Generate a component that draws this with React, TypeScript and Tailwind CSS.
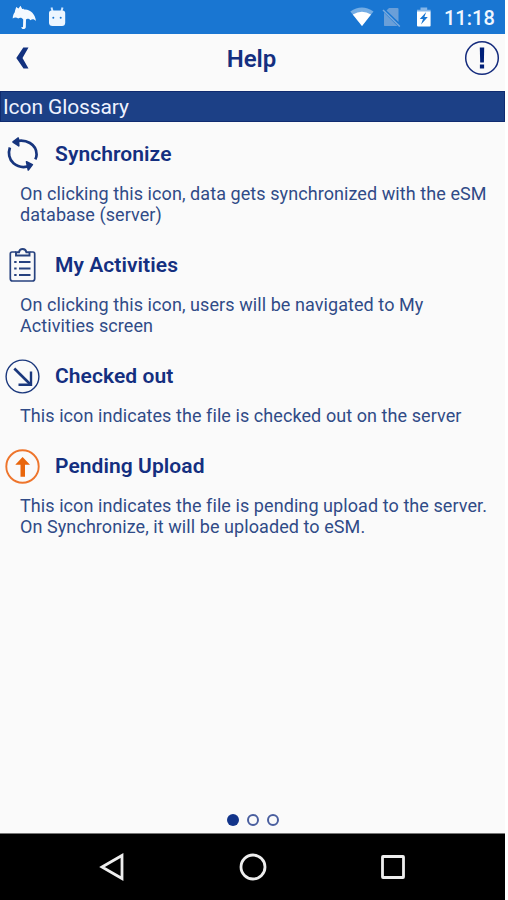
import type { ReactNode } from 'react';

// ---------------------------------------------------------------------------
// Status bar icons
// ---------------------------------------------------------------------------

function UmbrellaIcon() {
  return (
    <svg aria-hidden="true" className="h-6 w-6 shrink-0" viewBox="0 0 24 24" fill="#f4f9ff">
      <path d="M.7 13.500C1 8 4 4.800 8 4.300L13 4.500C19 5 23 9 24 16C22 13.700 20 13.700 18.500 15.200C16.800 13.500 15 13.500 14 14.500L13.800 22C13.800 23.800 12 24.300 10.500 24L9 22.500L11 22L11.200 14.500C10 12.500 8 12 6.200 13.500C4.500 12 2.500 12 .7 13.500Z" />
      <path d="M2.800 6.500L4.200 2L6.500 3.500L8.500 .8L10.200 4L12 3.800L11 7L4 9Z" />
    </svg>
  );
}

function AndroidHeadIcon() {
  return (
    <svg aria-hidden="true" className="h-5 w-[18px] shrink-0" viewBox="0 0 18 20">
      <path d="M3.500 .5L4.500 4M14.500 .5L13.500 4" stroke="#cfe6ff" strokeWidth="2" />
      <path d="M1 6Q1 3.500 3.500 3.500H14.500Q17.200 3.500 17.200 6V15.500Q17.200 19 14 19H4.500Q1 19 1 15.500Z" fill="#edf6ff" />
      <circle cx="5.300" cy="10.700" r="1" fill="#1976d2" />
      <circle cx="12.700" cy="10.700" r="1" fill="#1976d2" />
    </svg>
  );
}

function WifiIcon() {
  return (
    <svg aria-hidden="true" className="h-5 w-6 shrink-0" viewBox="0 0 24 20">
      <path d="M.3 4.500Q11.800-3.500 23.500 4.500L12 19Z" fill="#75ade4" />
      <path d="M2.800 7.500Q12 2 21 7.500L12 19Z" fill="#fff" />
    </svg>
  );
}

function NoSimIcon() {
  return (
    <svg aria-hidden="true" className="h-5 w-[19px] shrink-0" viewBox="0 0 19 20">
      <path d="M7 1H15.500Q16.500 1 16.500 2V15L4.500 3.500Z" fill="#6a9fd8" />
      <path d="M2 5.500L15.500 19H2.500Q2 19 2 18Z" fill="#6a9fd8" />
      <path d="M1 3L17.800 19.500" stroke="#78aadf" strokeWidth="1.500" />
    </svg>
  );
}

function BatteryIcon() {
  return (
    <svg aria-hidden="true" className="h-5 w-4 shrink-0" viewBox="0 0 16 20">
      <path d="M1 5V2.800H4.500V.6H11.200V2.800H14.600V5Z" fill="#85b6e8" />
      <path d="M1 4.500H14.600V18.500Q14.600 19.400 13.600 19.400H2Q1 19.400 1 18.500Z" fill="#fff" />
      <path d="M10.200 5L3.800 12H7L5 17.500L11.800 10H8.400Z" fill="#1976d2" />
    </svg>
  );
}

// ---------------------------------------------------------------------------
// Screen icons
// ---------------------------------------------------------------------------

function BackIcon() {
  return (
    <svg aria-hidden="true" className="h-6 w-4" viewBox="0 0 16 24">
      <path d="M8.300 1.500H13.500L7.500 12L13.500 22.500H8.500L1.300 12Z" fill="#12317f" />
    </svg>
  );
}

function AlertIcon() {
  return (
    <svg aria-hidden="true" className="h-9 w-9" viewBox="0 0 36 36" fill="none">
      <circle cx="18" cy="18" r="16.300" stroke="#142b7d" strokeWidth="1.500" />
      <path d="M15.800 7.500H20.200L19.900 22.500H16.200Z" fill="#001f78" />
      <rect x="15.900" y="24.500" width="4.200" height="4" fill="#001f78" />
    </svg>
  );
}

function SyncIcon() {
  return (
    <svg aria-hidden="true" className="h-9 w-9" viewBox="0 0 36 36" fill="none" stroke="#17357e" strokeWidth="2.700">
      <path d="M11 5.600C22 2.200 32.600 8.500 32.600 18.500C32.600 20.300 32.200 21.700 31.300 23.300" />
      <path d="M5.900 11.500C4 17 5 23.500 9.500 27.300C14.500 31.500 21 31.800 26.500 29.600" />
      <path d="M14.300 2L9 6L14.800 9.800Z" fill="#17357e" strokeWidth="1.600" strokeLinejoin="round" />
      <path d="M22.500 25.800L28.400 28.600L24.300 34Z" fill="#17357e" strokeWidth="1.600" strokeLinejoin="round" />
    </svg>
  );
}

function ActivitiesIcon() {
  return (
    <svg aria-hidden="true" className="h-9 w-9" viewBox="0 0 36 36" fill="none" stroke="#27427f">
      <path d="M12 5H8Q6.300 5 6.300 7V31.500Q6.300 34 8.500 34H28.500Q30.700 34 30.700 31.500V7Q30.700 5 29 5H26" strokeWidth="1.700" />
      <path d="M12 8.500V5.300H15Q15.500 2 18.700 2Q21.800 2 22.400 5.300H25.500V8.500Z" strokeWidth="1.900" />
      <path d="M15 15H26.500M15 21.500H26.500M15 28H26.500" strokeWidth="1.800" />
      <path d="M10.200 15H12.600M10.200 21.500H12.600M10.200 28H12.600" strokeWidth="2.200" />
    </svg>
  );
}

function CheckedOutIcon() {
  return (
    <svg aria-hidden="true" className="h-9 w-9" viewBox="0 0 36 36" fill="none" stroke="#1b387d">
      <circle cx="18.500" cy="18.500" r="16.400" strokeWidth="1.400" />
      <path d="M10.300 10.500L26.500 26.500" strokeWidth="2.600" />
      <path d="M27 13.500V26.700H14.500" strokeWidth="2.400" />
    </svg>
  );
}

function PendingIcon() {
  return (
    <svg aria-hidden="true" className="h-9 w-9" viewBox="0 0 36 36" fill="none">
      <circle cx="18.500" cy="18.500" r="16.200" stroke="#ee752c" strokeWidth="1.900" />
      <path d="M18.600 9L26 16.800H21V28.700H16.500V16.800H11.300Z" fill="#e9660c" />
    </svg>
  );
}

// ---------------------------------------------------------------------------
// Glossary
// ---------------------------------------------------------------------------

interface GlossaryItem {
  title: string;
  icon: ReactNode;
  lines: string[];
}

const ITEMS: GlossaryItem[] = [
  {
    title: 'Synchronize',
    icon: <SyncIcon />,
    lines: ['On clicking this icon, data gets synchronized with the eSM', 'database (server)'],
  },
  {
    title: 'My Activities',
    icon: <ActivitiesIcon />,
    lines: ['On clicking this icon, users will be navigated to My', 'Activities screen'],
  },
  {
    title: 'Checked out',
    icon: <CheckedOutIcon />,
    lines: ['This icon indicates the file is checked out on the server'],
  },
  {
    title: 'Pending Upload',
    icon: <PendingIcon />,
    lines: [
      'This icon indicates the file is pending upload to the server.',
      'On Synchronize, it will be uploaded to eSM.',
    ],
  },
];

function GlossaryRow({ item }: { item: GlossaryItem }) {
  return (
    <li className="pb-[22px]">
      <div className="flex h-9 items-center gap-[15px] pl-1">
        {item.icon}
        <h2 className="text-[21px] leading-9 font-semibold tracking-[0.07px] whitespace-nowrap text-[#142f80]">
          {item.title}
        </h2>
      </div>
      <div className="mt-[11px] pl-5 text-[18px] leading-[21px] tracking-[0.075px] whitespace-nowrap text-[#304b87]">
        {item.lines.map((line) => (
          <p key={line}>{line}</p>
        ))}
      </div>
    </li>
  );
}

export default function App() {
  return (
    <div className="h-[900px] w-full overflow-hidden bg-white font-['Roboto',sans-serif]">
      <div className="flex h-full w-[505px] flex-col bg-[#fafafa]">
        {/* Status bar */}
        <div className="flex h-[34px] shrink-0 items-center bg-[#1976d2] pl-3">
          <UmbrellaIcon />
          <div className="ml-3">
            <AndroidHeadIcon />
          </div>
          <div className="ml-auto flex items-center">
            <WifiIcon />
            <div className="ml-2">
              <NoSimIcon />
            </div>
            <div className="ml-[15px]">
              <BatteryIcon />
            </div>
            <span className="ml-3 w-[61px] pt-[2px] text-[20px] leading-6 font-medium whitespace-nowrap text-[#f0f7ff]">
              11:18
            </span>
          </div>
        </div>

        {/* Title bar */}
        <header className="flex h-[57px] shrink-0 items-start justify-between pt-[6px] pr-[5px] pl-[15px]">
          <button aria-label="Back" className="mt-[6px] w-6">
            <BackIcon />
          </button>
          <h1 className="pt-px text-[24px] leading-9 font-semibold text-[#142f80]">Help</h1>
          <button aria-label="About">
            <AlertIcon />
          </button>
        </header>

        <div className="h-[31px] shrink-0 border border-[#102b70] bg-[#1c4086] pl-[2px] text-[21px] leading-[30px] tracking-[-0.1px] text-[#eef2ff]">
          Icon Glossary
        </div>

        <ul className="flex-1 pt-[14px]">
          {ITEMS.map((item) => (
            <GlossaryRow key={item.title} item={item} />
          ))}
        </ul>

        {/* Page dots */}
        <div className="flex h-[19px] shrink-0 items-start justify-center gap-2">
          <span className="h-3 w-3 rounded-full bg-[#12348a]" />
          <span className="h-3 w-3 rounded-full border-2 border-[#4a5f9f]" />
          <span className="h-3 w-3 rounded-full border-2 border-[#4a5f9f]" />
        </div>

        {/* Navigation bar */}
        <nav className="flex h-[67px] shrink-0 items-center justify-center gap-[112px] border-t border-[#777] bg-black">
          <svg aria-hidden="true" className="h-7 w-7" viewBox="0 0 28 28" fill="none" stroke="#eee" strokeWidth="2.800">
            <path d="M3 14L23 2.500V25.500Z" />
          </svg>
          <svg aria-hidden="true" className="h-7 w-7" viewBox="0 0 28 28" fill="none" stroke="#eee" strokeWidth="2.800">
            <circle cx="14" cy="14" r="12" />
          </svg>
          <svg aria-hidden="true" className="h-7 w-7" viewBox="0 0 28 28" fill="none" stroke="#eee" strokeWidth="2.800">
            <rect x="3.500" y="3.500" width="21" height="21" rx="0.500" />
          </svg>
        </nav>
      </div>
    </div>
  );
}
